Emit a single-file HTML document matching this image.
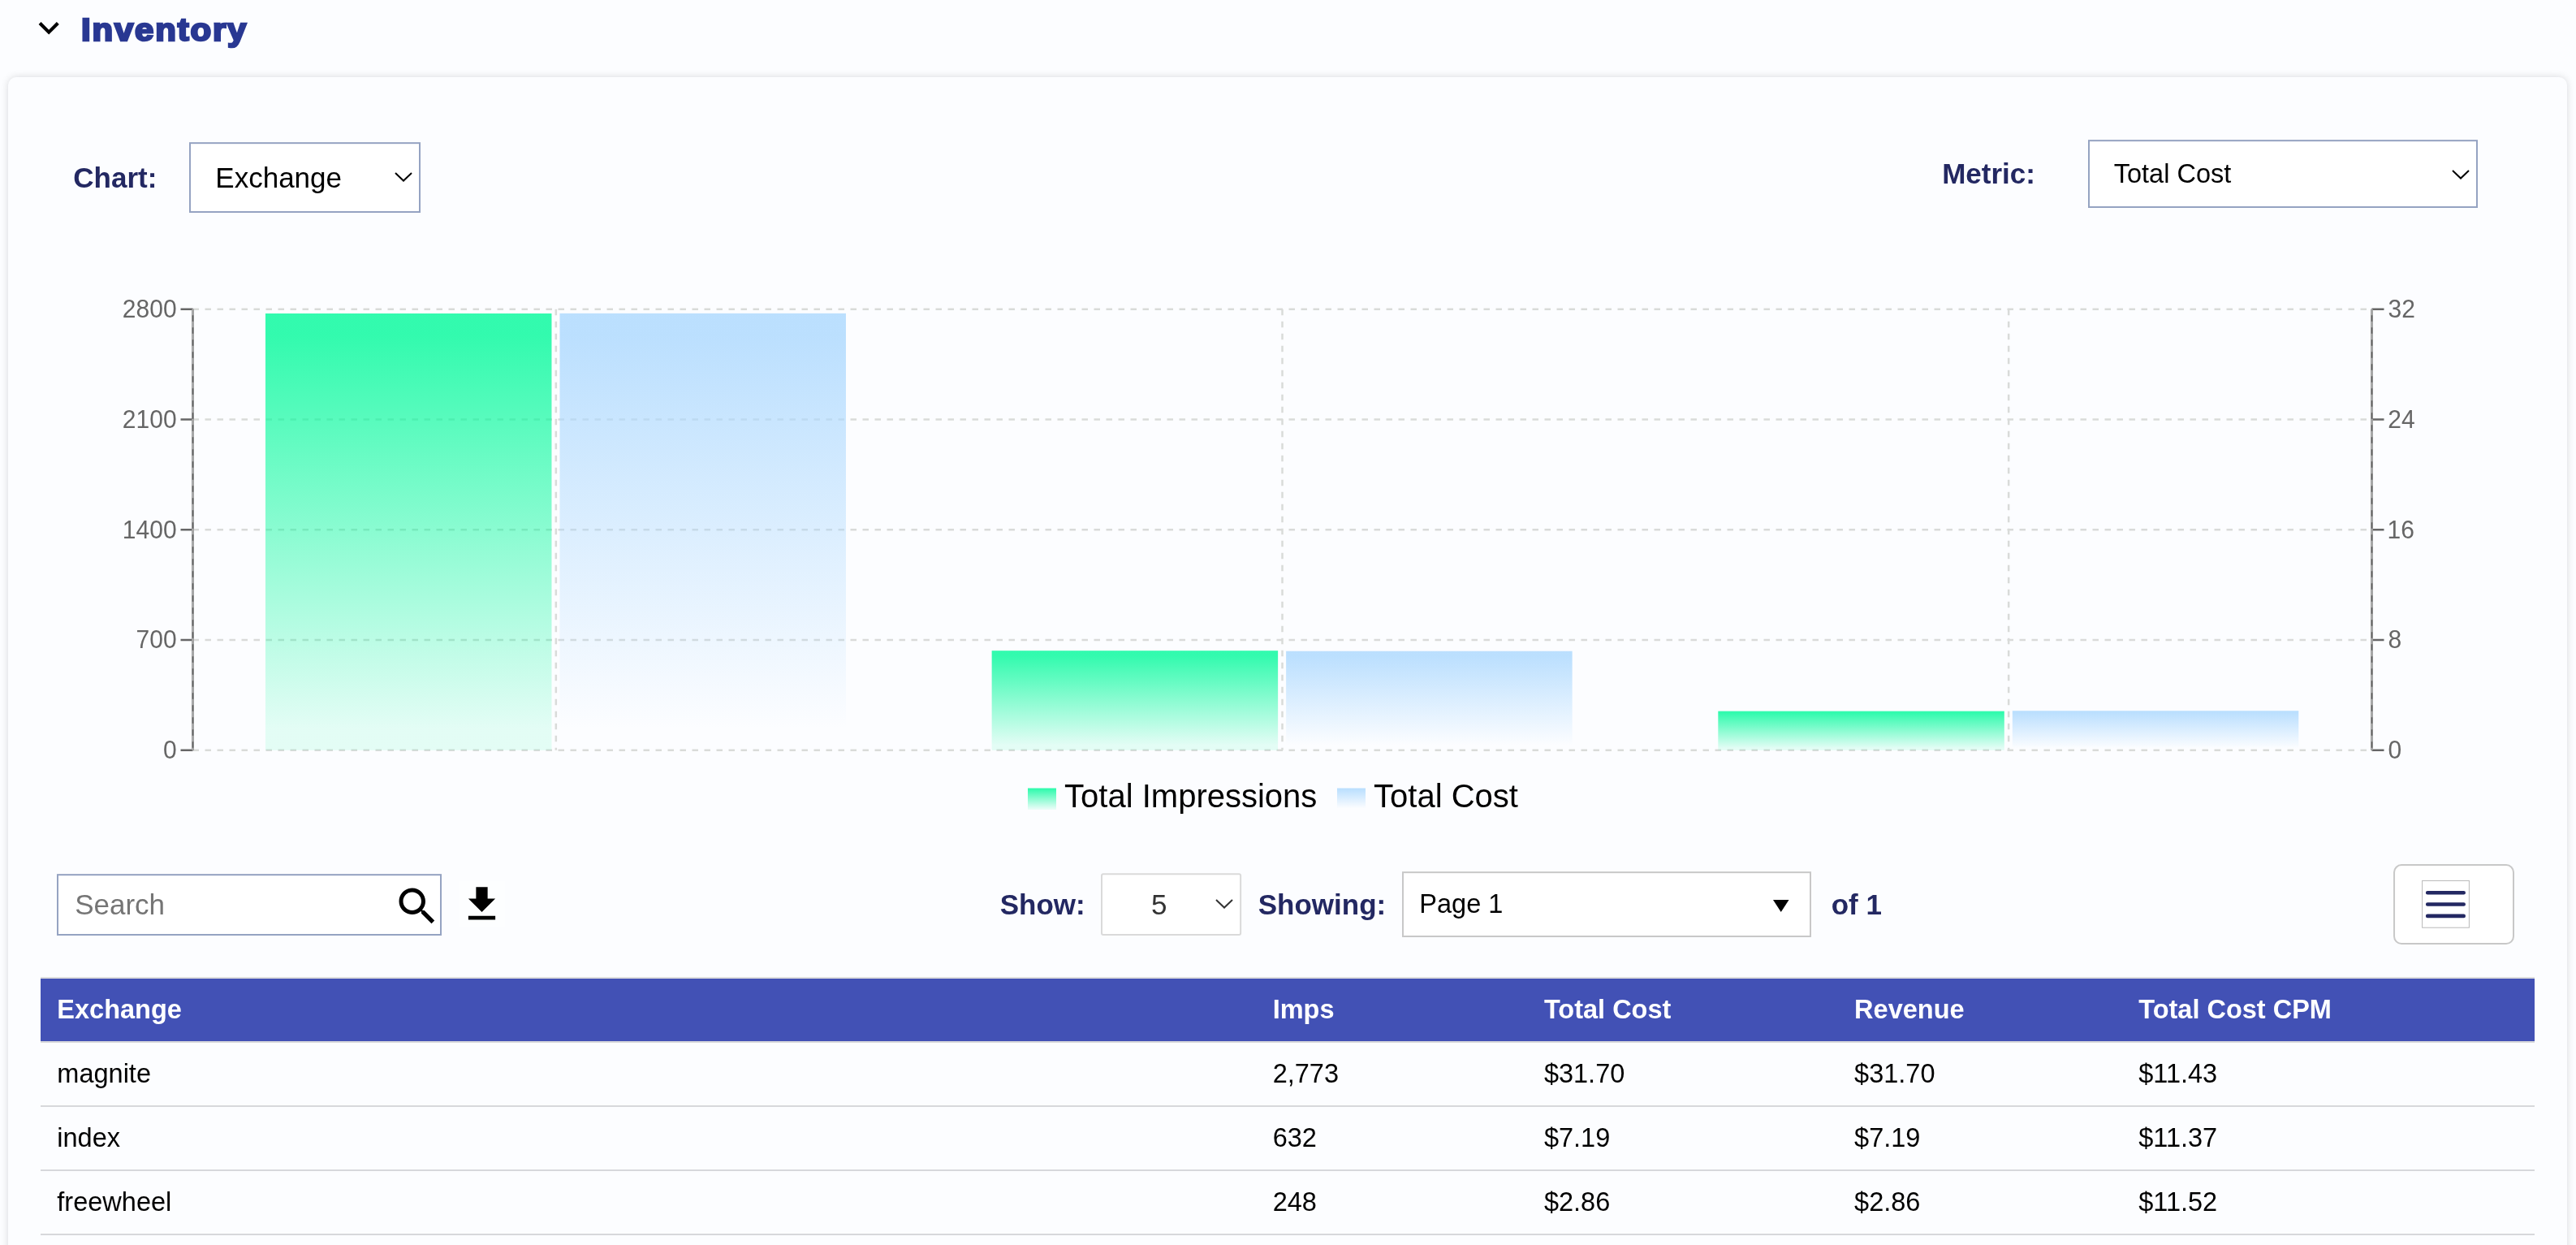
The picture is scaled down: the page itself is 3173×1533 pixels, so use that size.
<!DOCTYPE html>
<html><head><meta charset="utf-8"><title>Inventory</title>
<style>
html,body{margin:0;padding:0}
body{width:3173px;height:1533px;overflow:hidden;background:#fcfdff;font-family:"Liberation Sans",sans-serif;position:relative}
.t{position:absolute;white-space:nowrap;line-height:1}
.a{position:absolute}
svg{position:absolute;overflow:visible}
</style></head><body>
<div id="root" style="position:absolute;left:0;top:0;width:3173px;height:1533px;will-change:transform">

<div class="a" style="left:10px;top:95px;width:3152px;height:1500px;border-radius:10px;background:#fcfdff;box-shadow:0 0 10px rgba(0,0,20,0.15)"></div>
<svg style="left:34.9px;top:9.2px" width="50.4" height="50.4" viewBox="0 0 24 24"><path d="M16.59 8.59L12 13.17 7.41 8.59 6 10l6 6 6-6z" fill="#000"/></svg>
<div class="t" id="title" style="left:99.6px;top:18.3px;font-size:38.9px;font-weight:bold;color:#293892;-webkit-text-stroke:2.5px #293892;letter-spacing:1.7px;transform-origin:0 0;transform:scaleX(1.078)">Inventory</div>
<div class="t" style="left:90.31px;top:200.87px;font-size:35px;font-weight:bold;color:#232862;">Chart:</div>
<svg style="left:0;top:0" width="3173" height="1533"><rect x="234.000" y="176.150" width="283.000" height="84.850" rx="0" fill="#fff" stroke="#95a3c2" stroke-width="2"/></svg>
<div class="t" style="left:265.33px;top:201.12px;font-size:35px;color:#000;">Exchange</div>
<svg style="left:486.3px;top:211.6px" width="22" height="12" viewBox="0 0 22 12"><path d="M1 1 L11 10.5 L21 1" fill="none" stroke="#000" stroke-width="2"/></svg>
<div class="t" style="left:2392.16px;top:195.82px;font-size:35px;font-weight:bold;color:#232862;">Metric:</div>
<svg style="left:0;top:0" width="3173" height="1533"><rect x="2573.000" y="173.150" width="478.000" height="81.850" rx="0" fill="#fff" stroke="#95a3c2" stroke-width="2"/></svg>
<div class="t" style="left:2603.77px;top:198.29px;font-size:32.5px;color:#000;">Total Cost</div>
<svg style="left:3020px;top:208.75px" width="22" height="12" viewBox="0 0 22 12"><path d="M1 1 L11 10.5 L21 1" fill="none" stroke="#000" stroke-width="2"/></svg>
<svg style="left:0;top:0" width="3173" height="1100" viewBox="0 0 3173 1100">
<defs>
<linearGradient id="gg" x1="0" y1="0" x2="0" y2="1"><stop offset="5%" stop-color="#00fa9a" stop-opacity="0.8"/><stop offset="95%" stop-color="#00fa9a" stop-opacity="0.1"/></linearGradient>
<linearGradient id="gb" x1="0" y1="0" x2="0" y2="1"><stop offset="5%" stop-color="#abd8fe" stop-opacity="0.8"/><stop offset="95%" stop-color="#abd8fe" stop-opacity="0"/></linearGradient>
</defs>
<g stroke="#d9dbd9" stroke-width="2.5" stroke-dasharray="7.5 7.5" fill="none">
<line x1="237.5" y1="380.75" x2="2921.5" y2="380.75"/>
<line x1="237.5" y1="516.50" x2="2921.5" y2="516.50"/>
<line x1="237.5" y1="652.25" x2="2921.5" y2="652.25"/>
<line x1="237.5" y1="788.00" x2="2921.5" y2="788.00"/>
<line x1="237.5" y1="923.75" x2="2921.5" y2="923.75"/>
<line x1="684.83" y1="380.75" x2="684.83" y2="923.75"/>
<line x1="1579.50" y1="380.75" x2="1579.50" y2="923.75"/>
<line x1="2474.17" y1="380.75" x2="2474.17" y2="923.75"/>
</g>
<rect x="326.97" y="385.99" width="352.5" height="537.76" fill="url(#gg)"/>
<rect x="689.47" y="385.84" width="352.5" height="537.91" fill="url(#gb)"/>
<rect x="1221.63" y="801.19" width="352.5" height="122.56" fill="url(#gg)"/>
<rect x="1584.13" y="801.74" width="352.5" height="122.01" fill="url(#gb)"/>
<rect x="2116.30" y="875.66" width="352.5" height="48.09" fill="url(#gg)"/>
<rect x="2478.80" y="875.22" width="352.5" height="48.53" fill="url(#gb)"/>
<g stroke="#666" stroke-width="2.5" fill="none">
<line x1="237.5" y1="380.75" x2="237.5" y2="923.75"/>
<line x1="2921.5" y1="380.75" x2="2921.5" y2="923.75"/>
<line x1="222.5" y1="380.75" x2="237.5" y2="380.75"/>
<line x1="2921.5" y1="380.75" x2="2936.5" y2="380.75"/>
<line x1="222.5" y1="516.50" x2="237.5" y2="516.50"/>
<line x1="2921.5" y1="516.50" x2="2936.5" y2="516.50"/>
<line x1="222.5" y1="652.25" x2="237.5" y2="652.25"/>
<line x1="2921.5" y1="652.25" x2="2936.5" y2="652.25"/>
<line x1="222.5" y1="788.00" x2="237.5" y2="788.00"/>
<line x1="2921.5" y1="788.00" x2="2936.5" y2="788.00"/>
<line x1="222.5" y1="923.75" x2="237.5" y2="923.75"/>
<line x1="2921.5" y1="923.75" x2="2936.5" y2="923.75"/>
</g>
<g stroke="#ababab" stroke-width="2.5" stroke-dasharray="7.5 7.5" fill="none">
<line x1="237.5" y1="380.75" x2="237.5" y2="923.75"/>
<line x1="2921.5" y1="380.75" x2="2921.5" y2="923.75"/>
</g>
</svg>
<div class="t" style="left:150.83px;top:366.00px;font-size:30px;color:#666;transform-origin:0 84.65%;transform:scaleY(1.06);">2800</div>
<div class="t" style="left:150.83px;top:501.75px;font-size:30px;color:#666;transform-origin:0 84.65%;transform:scaleY(1.06);">2100</div>
<div class="t" style="left:150.83px;top:637.50px;font-size:30px;color:#666;transform-origin:0 84.65%;transform:scaleY(1.06);">1400</div>
<div class="t" style="left:167.52px;top:773.25px;font-size:30px;color:#666;transform-origin:0 84.65%;transform:scaleY(1.06);">700</div>
<div class="t" style="left:200.89px;top:909.00px;font-size:30px;color:#666;transform-origin:0 84.65%;transform:scaleY(1.06);">0</div>
<div class="t" style="left:2941.61px;top:366.00px;font-size:30px;color:#666;transform-origin:0 84.65%;transform:scaleY(1.06);">32</div>
<div class="t" style="left:2941.24px;top:501.75px;font-size:30px;color:#666;transform-origin:0 84.65%;transform:scaleY(1.06);">24</div>
<div class="t" style="left:2940.46px;top:637.50px;font-size:30px;color:#666;transform-origin:0 84.65%;transform:scaleY(1.06);">16</div>
<div class="t" style="left:2941.45px;top:773.25px;font-size:30px;color:#666;transform-origin:0 84.65%;transform:scaleY(1.06);">8</div>
<div class="t" style="left:2941.58px;top:909.00px;font-size:30px;color:#666;transform-origin:0 84.65%;transform:scaleY(1.06);">0</div>
<svg style="left:1266.25px;top:966.1px" width="35" height="35" viewBox="0 0 32 32"><path d="M0,4h32v24h-32z" fill="url(#gg)"/></svg>
<div class="t" style="left:1311.10px;top:959.89px;font-size:40px;color:#000;">Total Impressions</div>
<svg style="left:1647px;top:966.1px" width="35" height="35" viewBox="0 0 32 32"><path d="M0,4h32v24h-32z" fill="url(#gb)"/></svg>
<div class="t" style="left:1692.10px;top:959.89px;font-size:40px;color:#000;">Total Cost</div>
<svg style="left:0;top:0" width="3173" height="1533"><rect x="71.000" y="1077.150" width="472.000" height="73.850" rx="0" fill="#fff" stroke="#95a3c2" stroke-width="2"/></svg>
<div class="t" style="left:92.16px;top:1096.37px;font-size:35px;color:#757575;">Search</div>
<svg style="left:483.9px;top:1085.65px" width="60" height="60" viewBox="0 0 24 24"><path d="M15.5 14h-.79l-.28-.27C15.41 12.59 16 11.11 16 9.5 16 5.91 13.09 3 9.5 3S3 5.91 3 9.5 5.91 16 9.5 16c1.61 0 3.09-.59 4.23-1.57l.27.28v.79l5 4.99L20.49 19l-4.99-5zm-6 0C7.01 14 5 11.99 5 9.5S7.01 5 9.5 5 14 7.01 14 9.5 11.99 14 9.5 14z" fill="#000"/></svg>
<div class="a" style="left:565px;top:1084.9px;width:57px;height:57px;background:#fdfeff"></div>
<svg style="left:564.9px;top:1084.9px" width="57" height="57" viewBox="0 0 24 24"><path d="M19 9h-4V3H9v6H5l7 7 7-7zM5 18v2h14v-2H5z" fill="#000"/></svg>
<div class="t" style="left:1231.68px;top:1096.12px;font-size:35px;font-weight:bold;color:#232862;">Show:</div>
<svg style="left:0;top:0" width="3173" height="1533"><rect x="1357.000" y="1076.150" width="171.150" height="74.850" rx="2" fill="#fff" stroke="#dadada" stroke-width="2"/></svg>
<div class="t" style="left:1418.10px;top:1096.12px;font-size:35px;color:#333;">5</div>
<svg style="left:1496.7px;top:1106.7px" width="22" height="12" viewBox="0 0 22 12"><path d="M1 1 L11 10.5 L21 1" fill="none" stroke="#333" stroke-width="2"/></svg>
<div class="t" style="left:1549.74px;top:1096.12px;font-size:35px;font-weight:bold;color:#232862;">Showing:</div>
<svg style="left:0;top:0" width="3173" height="1533"><rect x="1728.000" y="1074.150" width="502.000" height="78.850" rx="0" fill="#fff" stroke="#c8c8c8" stroke-width="2"/></svg>
<div class="t" style="left:1748.33px;top:1097.49px;font-size:32.5px;color:#000;">Page 1</div>
<svg style="left:2184.25px;top:1108px" width="19.5" height="15" viewBox="0 0 19.5 15"><path d="M0 0H19.5L9.75 15z" fill="#000"/></svg>
<div class="t" style="left:2255.63px;top:1095.72px;font-size:35px;font-weight:bold;color:#232862;">of 1</div>
<svg style="left:0;top:0" width="3173" height="1533"><rect x="2949.050" y="1065.050" width="146.950" height="96.950" rx="9" fill="#fff" stroke="#c8c8c8" stroke-width="2"/></svg>
<svg style="left:0;top:0" width="3173" height="1533"><rect x="2983.600" y="1084.450" width="57.800" height="57.750" rx="0" fill="none" stroke="#b9b9b9" stroke-width="1"/></svg>
<svg style="left:0;top:0" width="3173" height="1533"><path d="M2990.2 1099.2H3034.7M2990.2 1113.55H3034.7M2990.2 1127.9H3034.7" fill="none" stroke="#232862" stroke-width="4.6" stroke-linecap="round"/></svg>
<div class="a" style="left:50px;top:1203px;width:3072px;height:2px;background:#dedede"></div>
<div class="a" style="left:50px;top:1205px;width:3072px;height:77px;background:#4251b5"></div>
<div class="t" style="left:70.34px;top:1226.84px;font-size:32.5px;font-weight:bold;color:#fff;">Exchange</div>
<div class="t" style="left:1567.70px;top:1226.84px;font-size:32.5px;font-weight:bold;color:#fff;">Imps</div>
<div class="t" style="left:1901.90px;top:1226.84px;font-size:32.5px;font-weight:bold;color:#fff;">Total Cost</div>
<div class="t" style="left:2284.10px;top:1226.84px;font-size:32.5px;font-weight:bold;color:#fff;">Revenue</div>
<div class="t" style="left:2634.20px;top:1226.84px;font-size:32.5px;font-weight:bold;color:#fff;">Total Cost CPM</div>
<div class="t" style="left:70.34px;top:1305.99px;font-size:32.5px;color:#000;">magnite</div>
<div class="t" style="left:1567.70px;top:1305.99px;font-size:32.5px;color:#000;">2,773</div>
<div class="t" style="left:1901.90px;top:1305.99px;font-size:32.5px;color:#000;">$31.70</div>
<div class="t" style="left:2284.10px;top:1305.99px;font-size:32.5px;color:#000;">$31.70</div>
<div class="t" style="left:2634.20px;top:1305.99px;font-size:32.5px;color:#000;">$11.43</div>
<div class="a" style="left:50px;top:1361px;width:3072px;height:2px;background:#d7d8db"></div>
<div class="t" style="left:70.34px;top:1384.99px;font-size:32.5px;color:#000;">index</div>
<div class="t" style="left:1567.70px;top:1384.99px;font-size:32.5px;color:#000;">632</div>
<div class="t" style="left:1901.90px;top:1384.99px;font-size:32.5px;color:#000;">$7.19</div>
<div class="t" style="left:2284.10px;top:1384.99px;font-size:32.5px;color:#000;">$7.19</div>
<div class="t" style="left:2634.20px;top:1384.99px;font-size:32.5px;color:#000;">$11.37</div>
<div class="a" style="left:50px;top:1440px;width:3072px;height:2px;background:#d7d8db"></div>
<div class="t" style="left:70.34px;top:1463.99px;font-size:32.5px;color:#000;">freewheel</div>
<div class="t" style="left:1567.70px;top:1463.99px;font-size:32.5px;color:#000;">248</div>
<div class="t" style="left:1901.90px;top:1463.99px;font-size:32.5px;color:#000;">$2.86</div>
<div class="t" style="left:2284.10px;top:1463.99px;font-size:32.5px;color:#000;">$2.86</div>
<div class="t" style="left:2634.20px;top:1463.99px;font-size:32.5px;color:#000;">$11.52</div>
<div class="a" style="left:50px;top:1519px;width:3072px;height:2px;background:#d7d8db"></div>
<div class="a" style="left:50px;top:1282px;width:3072px;height:1.5px;background:#d7d8db"></div>
</div></body></html>
